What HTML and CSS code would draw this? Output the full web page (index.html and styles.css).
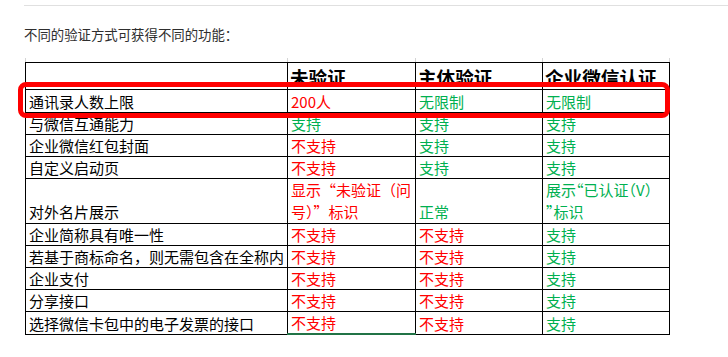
FILE: index.html
```html
<!DOCTYPE html>
<html lang="zh-CN">
<head>
<meta charset="utf-8">
<link rel="stylesheet" href="styles.css">
</head>
<body>
<div class="rule"></div>
<p class="intro">不同的验证方式可获得不同的功能：</p>
<div class="sheet">
  <span class="tick t1"></span><span class="tick t2"></span><span class="tick t3"></span><span class="tick t4"></span><span class="tick t5"></span>
  <span class="leftline"></span>
  <table class="grid">
    <colgroup>
      <col class="c1"><col class="c2"><col class="c3"><col class="c4">
    </colgroup>
    <tr class="head">
      <th></th><th>未验证</th><th>主体验证</th><th>企业微信认证</th>
    </tr>
    <tr class="r23">
      <td>通讯录人数上限</td><td class="no">200人</td><td class="yes">无限制</td><td class="yes">无限制</td>
    </tr>
    <tr>
      <td>与微信互通能力</td><td class="yes">支持</td><td class="yes">支持</td><td class="yes">支持</td>
    </tr>
    <tr>
      <td>企业微信红包封面</td><td class="no">不支持</td><td class="yes">支持</td><td class="yes">支持</td>
    </tr>
    <tr>
      <td>自定义启动页</td><td class="no">不支持</td><td class="yes">支持</td><td class="yes">支持</td>
    </tr>
    <tr class="tall">
      <td>对外名片展示</td><td class="no">显示“未验证（问<br>号）”标识</td><td class="yes">正常</td><td class="yes narrow">展示“已认证（V）<br>”标识</td>
    </tr>
    <tr>
      <td>企业简称具有唯一性</td><td class="no">不支持</td><td class="no">不支持</td><td class="yes">支持</td>
    </tr>
    <tr>
      <td>若基于商标命名，则无需包含在全称内</td><td class="no">不支持</td><td class="no">不支持</td><td class="yes">支持</td>
    </tr>
    <tr>
      <td>企业支付</td><td class="no">不支持</td><td class="no">不支持</td><td class="yes">支持</td>
    </tr>
    <tr>
      <td>分享接口</td><td class="no">不支持</td><td class="no">不支持</td><td class="yes">支持</td>
    </tr>
    <tr>
      <td>选择微信卡包中的电子发票的接口</td><td class="no selected">不支持</td><td class="no">不支持</td><td class="yes">支持</td>
    </tr>
  </table>
  <div class="highlight"></div>
</div>
</body>
</html>
```

FILE: styles.css
```css
html, body {
  margin: 0;
  padding: 0;
  background: #ffffff;
}

body {
  font-family: "Noto Sans CJK SC", "Noto Sans", sans-serif;
  color: #000;
}

.rule {
  margin: 5px 0 0 24px;
  border-top: 1px solid #e0e0e0;
}

.intro {
  margin: 18px 0 0 24px;
  font-size: 13.4px;
  line-height: 20px;
  color: #2e2e2e;
}

.sheet {
  position: relative;
  margin-top: 18px;
}

.grid {
  margin-left: 25px;
  border-collapse: collapse;
  table-layout: fixed;
  width: 644px;
}

.c1 { width: 262px; }
.c2 { width: 128px; }
.c3 { width: 127px; }
.c4 { width: 127px; }

.grid th,
.grid td {
  border: 1px solid #000;
  padding: 0 2px 0 3px;
  vertical-align: bottom;
  text-align: left;
  white-space: nowrap;
  font-size: 15px;
  line-height: 20px;
  height: 21px;
}

.grid th {
  font-size: 18.6px;
  font-weight: bold;
  line-height: 24px;
  height: 26px;
  padding-left: 2px;
}

.grid tr.r23 td { height: 22px; }

.grid tr.tall td {
  height: 43px;
  line-height: 22px;
}

.grid td.narrow {
  font-feature-settings: "halt";
}

.no { color: #ff0000; }
.yes { color: #00b050; }

.grid td.selected {
  border-bottom: 2px solid #217346;
}

.tick {
  position: absolute;
  top: -4px;
  width: 1px;
  height: 4px;
  background: #d4d4d4;
}
.t1 { left: 25px; }
.t2 { left: 287px; }
.t3 { left: 415px; }
.t4 { left: 542px; }
.t5 { left: 669px; }

.leftline {
  position: absolute;
  left: 25px;
  bottom: -4px;
  width: 1px;
  height: 4px;
  background: #d4d4d4;
}

.highlight {
  position: absolute;
  left: 18px;
  top: 20px;
  width: 652px;
  height: 36px;
  box-sizing: border-box;
  border: 5px solid #ff0000;
  border-radius: 8px;
}
```
